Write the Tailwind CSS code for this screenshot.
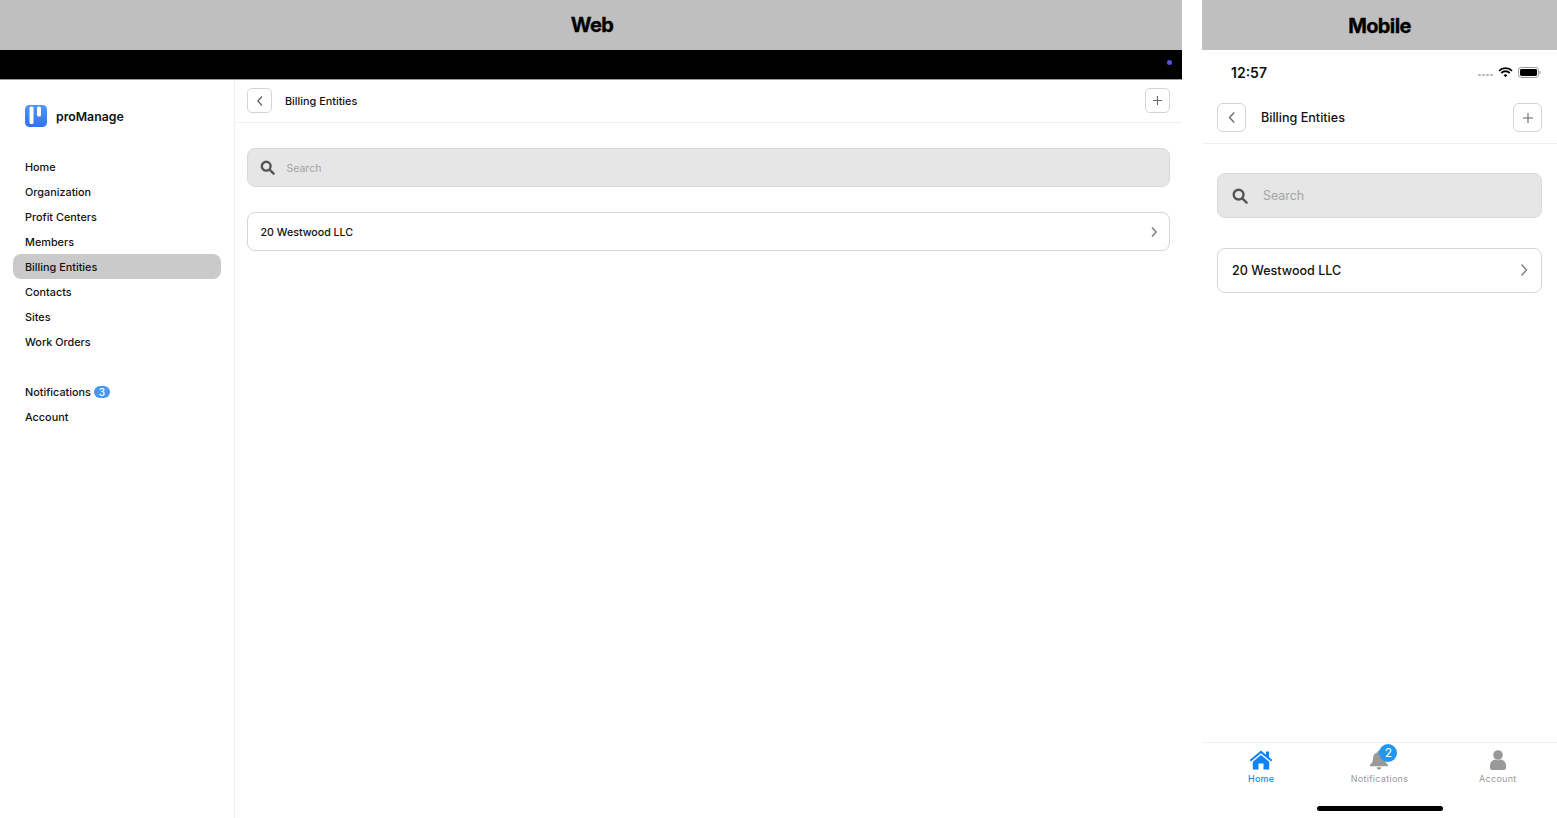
<!DOCTYPE html>
<html lang="en">
<head>
<meta charset="utf-8">
<script src="https://cdn.jsdelivr.net/npm/@tailwindcss/browser@4"></script>
<title>Billing Entities</title>
</head>
<body class="bg-white overflow-hidden font-['Inter',sans-serif] text-[#111]">
<div class="flex w-[1557px] h-[818px] gap-5">
  <section class="w-[1182px] h-full flex flex-col">
    <div class="h-[50px] bg-[#bfbfbf] flex items-center justify-center text-[20px] font-bold text-black tracking-[-0.6px] [-webkit-text-stroke:0.35px_black] pb-[1px] pl-[2px]">Web</div>
    <div class="h-[30px] bg-black border-b border-[#999] flex items-center justify-end pr-[10px]">
      <span class="w-[5px] h-[5px] rounded-full bg-[#5a50e0] -mt-[5px]"></span>
    </div>
    <div class="flex flex-1 min-h-0">
      <aside class="w-[235px] border-r border-[#f0f0f0] px-[13px]">
        <div class="flex items-center gap-[9px] pl-3 pb-[2px] h-[74px]">
          <svg width="22" height="22" viewBox="0 0 22 22" class="shrink-0">
            <defs><linearGradient id="g" x1="0" y1="0" x2="0" y2="1"><stop offset="0" stop-color="#4f97f7"/><stop offset="1" stop-color="#3273f0"/></linearGradient></defs>
            <rect width="22" height="22" rx="4.5" fill="url(#g)"/>
            <rect x="4.5" y="1.5" width="4" height="17.5" rx="1.6" fill="#fff"/>
            <rect x="12" y="1.5" width="4" height="10" rx="1.6" fill="#fff"/>
          </svg>
          <span class="text-[12.3px] font-semibold pt-[2px]">proManage</span>
        </div>
        <nav class="text-[10.85px] font-medium">
          <a class="flex items-center h-[25px] pl-3 pt-[2px]">Home</a>
          <a class="flex items-center h-[25px] pl-3 pt-[2px]">Organization</a>
          <a class="flex items-center h-[25px] pl-3 pt-[2px]">Profit Centers</a>
          <a class="flex items-center h-[25px] pl-3 pt-[2px]">Members</a>
          <a class="flex items-center h-[25px] pl-3 pt-[2px] w-[208px] rounded-lg bg-[#cacaca]">Billing Entities</a>
          <a class="flex items-center h-[25px] pl-3 pt-[2px]">Contacts</a>
          <a class="flex items-center h-[25px] pl-3 pt-[2px]">Sites</a>
          <a class="flex items-center h-[25px] pl-3 pt-[2px]">Work Orders</a>
          <a class="flex items-center h-[25px] pl-3 pt-[2px] mt-[25px]">Notifications<span class="ml-[3px] -mt-[1px] w-4 h-3 rounded-full bg-[#4a98ee] text-white text-[10px] font-medium flex items-center justify-center">3</span></a>
          <a class="flex items-center h-[25px] pl-3 pt-[2px]">Account</a>
        </nav>
      </aside>
      <main class="flex-1 min-w-0">
        <header class="h-[43px] pb-[1px] border-b border-[#f0f0f0] flex items-center justify-between px-3">
          <div class="flex items-center gap-[13px]">
            <button class="w-[25px] h-[25px] rounded-[5px] border border-[#d4d4d4] flex items-center justify-center">
              <svg width="10" height="12" viewBox="0 0 10 12" fill="none" stroke="#666" stroke-width="1.3"><path d="M7 1.5 2.8 6 7 10.5"/></svg>
            </button>
            <span class="text-[10.85px] font-medium pt-[2px]">Billing Entities</span>
          </div>
          <button class="w-[25px] h-[25px] rounded-[5px] border border-[#d4d4d4] flex items-center justify-center">
            <svg width="11" height="11" viewBox="0 0 11 11" stroke="#666" stroke-width="1.1"><path d="M5.5 1v9M1 5.5h9"/></svg>
          </button>
        </header>
        <div class="px-3 pt-[25px] flex flex-col gap-[25px]">
          <div class="h-[39px] rounded-lg border border-[#d9d9d9] bg-[#e6e6e6] flex items-center pl-3 gap-[12px]">
            <svg width="15" height="15" viewBox="0 0 15 15" fill="none" stroke="#555" stroke-width="2.4" class="-ml-[0.5px]"><circle cx="6.2" cy="6.2" r="4.4"/><path d="m9.6 9.6 4 4" stroke-linecap="round"/></svg>
            <span class="text-[10.5px] text-[#a3a3a3] pt-[3px]">Search</span>
          </div>
          <div class="h-[39px] rounded-lg border border-[#d6d6d6] flex items-center justify-between pl-[12.5px] pr-[10.5px]">
            <span class="text-[10.65px] font-medium pt-[3px]">20 Westwood LLC</span>
            <svg width="10" height="12" viewBox="0 0 10 12" fill="none" stroke="#777" stroke-width="1.3"><path d="M3 1.5 7.2 6 3 10.5"/></svg>
          </div>
        </div>
      </main>
    </div>
  </section>

  <section class="w-[355px] h-full flex flex-col">
    <div class="h-[50px] bg-[#bfbfbf] flex items-center justify-center text-[20px] font-bold text-black tracking-[-0.6px] [-webkit-text-stroke:0.35px_black] pt-[1px]">Mobile</div>
    <div class="h-[44px] flex items-center justify-between pl-[29px] pr-[16px]">
      <span class="text-[14px] font-semibold pt-[1px]">12:57</span>
      <div class="flex items-center gap-[5px]">
        <span class="flex gap-[1.5px] mt-[5px]"><i class="w-[2.5px] h-[2px] rounded-full bg-[#b5b5b5]"></i><i class="w-[2.5px] h-[2px] rounded-full bg-[#b5b5b5]"></i><i class="w-[2.5px] h-[2px] rounded-full bg-[#b5b5b5]"></i><i class="w-[2.5px] h-[2px] rounded-full bg-[#b5b5b5]"></i></span>
        <svg width="15" height="11" viewBox="0 0 15 11" fill="none" stroke="#000" stroke-width="1.8"><path d="M1 3.8a9.2 9.2 0 0 1 13 0M3.3 6a5.9 5.9 0 0 1 8.4 0"/><path d="M5.7 8.2a2.5 2.5 0 0 1 3.6 0L7.5 10.3z" fill="#000" stroke="none"/></svg>
        <svg width="23" height="11" viewBox="0 0 23 11" class="ml-[0.5px]"><rect x="0.5" y="0.5" width="20" height="10" rx="2.8" fill="none" stroke="#999"/><rect x="2" y="2" width="17" height="7" rx="1.4" fill="#000"/><rect x="21.5" y="4" width="1" height="3" rx="0.5" fill="#999"/></svg>
      </div>
    </div>
    <header class="h-[50px] pb-[2px] border-b border-[#f0f0f0] flex items-center justify-between px-[15px]">
      <div class="flex items-center gap-[15px]">
        <button class="w-[29px] h-[29px] rounded-md border border-[#d4d4d4] flex items-center justify-center">
          <svg width="10" height="13" viewBox="0 0 10 13" fill="none" stroke="#666" stroke-width="1.3"><path d="M7.2 1.5 2.5 6.5l4.7 5"/></svg>
        </button>
        <span class="text-[12.6px] font-medium pt-[1px]">Billing Entities</span>
      </div>
      <button class="w-[29px] h-[29px] rounded-md border border-[#d4d4d4] flex items-center justify-center">
        <svg width="12" height="12" viewBox="0 0 12 12" stroke="#666" stroke-width="1.1"><path d="M6 1v10M1 6h10"/></svg>
      </button>
    </header>
    <div class="px-[15px] pt-[29px] flex flex-col gap-[30px]">
      <div class="h-[45px] rounded-lg border border-[#d9d9d9] bg-[#e6e6e6] flex items-center pl-[14px] gap-[15px]">
        <svg width="16" height="16" viewBox="0 0 16 16" fill="none" stroke="#555" stroke-width="2.4"><circle cx="6.6" cy="6.6" r="4.9"/><path d="m10.3 10.3 4.3 4.3" stroke-linecap="round"/></svg>
        <span class="text-[12.4px] text-[#a3a3a3] pt-[2px]">Search</span>
      </div>
      <div class="h-[45px] rounded-lg border border-[#d6d6d6] flex items-center justify-between pl-[14px] pr-[12.5px]">
        <span class="text-[12.55px] font-medium pt-[2px]">20 Westwood LLC</span>
        <svg width="10" height="14" viewBox="0 0 10 14" fill="none" stroke="#777" stroke-width="1.3" class="-mt-[1px]"><path d="M2.5 1.5 7.5 7l-5 5.5"/></svg>
      </div>
    </div>
    <div class="mt-auto h-[76px] border-t border-[#f0f0f0] relative">
      <div class="grid grid-cols-3 pt-[7px] text-[9px] text-[#999] tracking-[0.3px]">
        <div class="flex flex-col items-center text-[#1e88f5] font-medium tracking-[0.2px]">
          <svg width="24" height="20" viewBox="0 0 24 20" fill="#1481f6"><path d="M12 0.5 0.6 10l1.3 1.6L12 3.2l10.1 8.4 1.3-1.6-3.4-2.8V1.5h-3v3.2z"/><path d="M12 5 3.8 11.8V19.5h5.7v-6h5v6h5.7v-7.7z"/></svg>
          <span class="mt-[2px]">Home</span>
        </div>
        <div class="flex flex-col items-center relative">
          <svg width="20" height="20" viewBox="0 0 20 20" fill="#999"><path d="M10 0.5a1.6 1.6 0 0 0-1.6 1.7C5.5 3 4 5.4 4 8.2c0 3.6-1.2 5-3 6.6v1.4h18v-1.4c-1.8-1.6-3-3-3-6.6 0-2.8-1.5-5.2-4.4-6A1.6 1.6 0 0 0 10 .5z"/><path d="M7.6 17.2h4.8a2.4 2.4 0 0 1-4.8 0z"/></svg>
          <span class="mt-[2px]">Notifications</span>
          <span class="absolute left-1/2 top-[-6px] w-[18px] h-[18px] rounded-full bg-[#2196f3] text-white text-[12px] font-normal flex items-center justify-center">2</span>
        </div>
        <div class="flex flex-col items-center">
          <svg width="18" height="20" viewBox="0 0 18 20" fill="#999"><circle cx="9" cy="5" r="4.8"/><path d="M1 16c0-4 2.6-6.2 5-6.5 1.8 1 4.2 1 6 0 2.4.3 5 2.5 5 6.5v1.5a2.5 2.5 0 0 1-2.5 2.5h-11A2.5 2.5 0 0 1 1 17.5z"/></svg>
          <span class="mt-[2px]">Account</span>
        </div>
      </div>
      <div class="absolute left-[115px] top-[63px] w-[126px] h-[5px] rounded-full bg-black"></div>
    </div>
  </section>
</div>
</body>
</html>
